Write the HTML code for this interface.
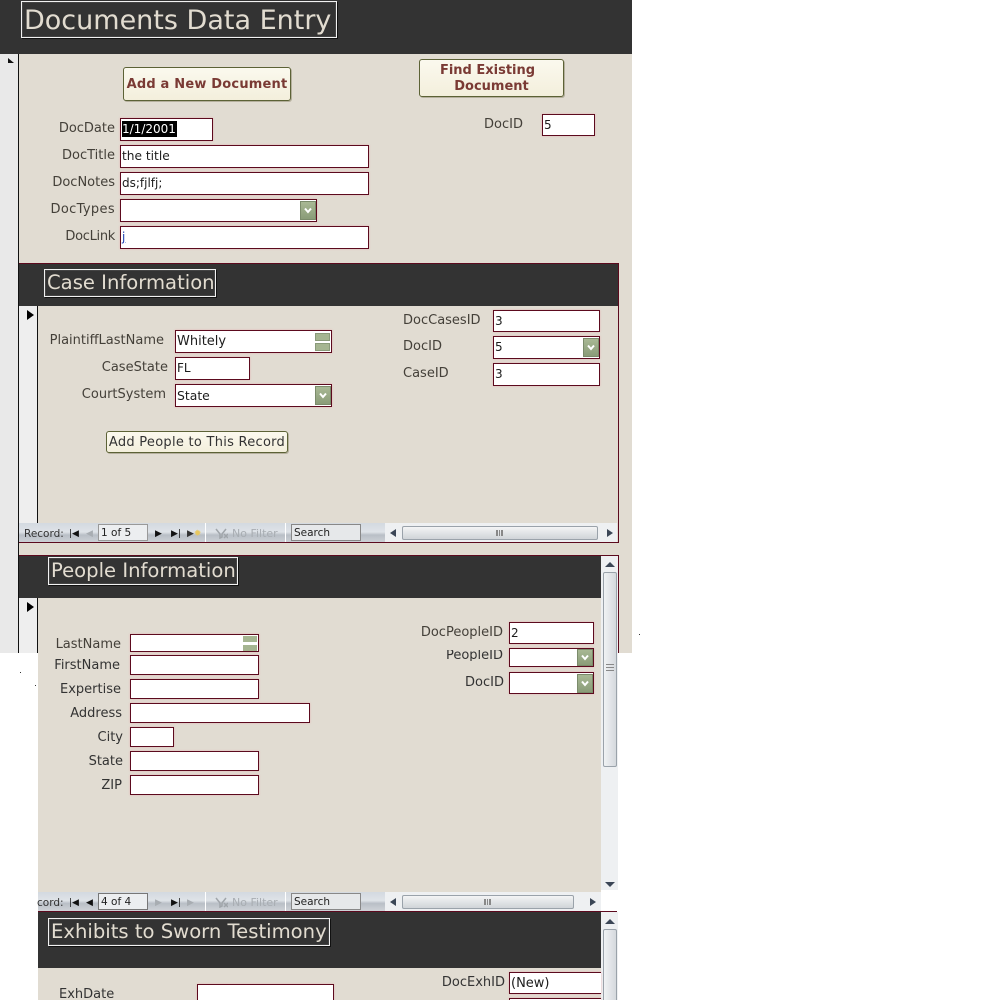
<!DOCTYPE html>
<html><head><meta charset="utf-8"><style>
html,body{margin:0;padding:0;background:#fff;width:1000px;height:1000px;overflow:hidden}
body{position:relative;font-family:"DejaVu Sans","Liberation Sans",sans-serif}
div,span.a{position:absolute;box-sizing:border-box}
.l{font-size:13px;color:#444039;text-align:right;white-space:nowrap;line-height:16px;height:16px;margin-top:1px}
.i{background:#fff;border:1px solid #5c0a1e;font-size:12px;color:#1c1c1c;line-height:21px;padding-left:1px;white-space:nowrap;overflow:hidden;box-shadow:0 0 2px #e6b4b4}
.t{border:1px solid #f2f2f2;outline:1px solid #444;outline-offset:-2px;background:#333;color:#e2dcd0;white-space:nowrap;font-size:19.6px;padding-left:2px;box-shadow:1px 1px 0 #111}
.d{background:#333}
.dd{width:16px;height:19px;background:linear-gradient(#a8b894,#8a9c78);border:1px solid #7b8b6b}
.dd svg{position:absolute;left:3px;top:5px;width:8px;height:7px}
.b{background:linear-gradient(#fbf9ee,#f3efdc);border:1px solid #5c6236;border-radius:3px;box-shadow:1px 1px 0 #b5b09d;text-align:center;white-space:nowrap}
.nav{height:20px;background:linear-gradient(#d3d9e0 0,#dfe3e8 45%,#b9bfc6 60%,#cfd3d8 100%);font-size:10.5px;color:#333;line-height:20px;white-space:nowrap}
.nb{border:1px solid #7c8794;background:#eceef0;font-size:10.5px;line-height:16px;height:17px;top:1px;padding-left:2px;color:#222}
.th{background:linear-gradient(90deg,#f0f2f4,#d5d9dd);border:1px solid #9aa2aa;border-radius:2px}
.thh{background:linear-gradient(#f3f4f5,#d0d4d8);border:1px solid #9aa2aa;border-radius:2px}
.g{color:#a8adb2}
.k{color:#111}
.nav span{top:1px}
</style></head><body>

<div class="d" style="left:0;top:0;width:632px;height:54px"></div>
<div style="left:0;top:54px;width:18px;height:599px;background:#e9e9e9"></div>
<div style="left:18px;top:54px;width:1px;height:599px;background:#111"></div>
<div style="left:19px;top:54px;width:613px;height:599px;background:#e1dcd2"></div>
<div style="left:38px;top:653px;width:563px;height:347px;background:#e1dcd2"></div>
<div style="left:8px;top:58px;width:0;height:0;border-left:6px solid #111;border-top:5px solid transparent"></div>

<div class="t" style="left:21px;top:1px;width:316px;height:37px;font-size:27px;line-height:38px">Documents Data Entry</div>

<div class="b" style="left:123px;top:67px;width:168px;height:34px;font-size:13px;font-weight:bold;color:#7a3a34;line-height:33px;letter-spacing:.2px">Add a New Document</div>
<div class="b" style="left:419px;top:59px;width:145px;height:38px;font-size:13px;font-weight:bold;color:#7a3a34;line-height:16px;padding-top:3px;white-space:normal"><span style="position:relative;left:-4px">Find Existing</span><br>Document</div>

<div class="l" style="left:20px;width:95px;top:120px">DocDate</div>
<div class="i" style="left:120px;top:118px;width:93px;height:23px"><span style="background:#000;color:#fff;display:inline-block;line-height:16px;width:55px;margin-top:2px;vertical-align:top">1/1/2001</span></div>
<div class="l" style="left:20px;width:95px;top:147px">DocTitle</div>
<div class="i" style="left:120px;top:145px;width:249px;height:23px;font-size:12.2px">the title</div>
<div class="l" style="left:20px;width:95px;top:174px">DocNotes</div>
<div class="i" style="left:120px;top:172px;width:249px;height:23px">ds;fjlfj;</div>
<div class="l" style="left:20px;width:95px;top:201px;letter-spacing:.35px">DocTypes</div>
<div class="i" style="left:120px;top:199px;width:197px;height:23px"></div>
<div class="dd" style="left:300px;top:201px"><svg viewBox="0 0 8 7"><path d="M1 1.5L4 5L7 1.5" fill="none" stroke="#fff" stroke-width="2"/></svg></div>
<div class="l" style="left:20px;width:95px;top:228px;letter-spacing:-.3px">DocLink</div>
<div class="i" style="left:120px;top:226px;width:249px;height:23px;color:#1a3fb0;text-decoration:underline">j</div>
<div class="l" style="left:470px;width:53px;top:116px">DocID</div>
<div class="i" style="left:542px;top:114px;width:53px;height:22px">5</div>

<!-- Case -->
<div style="left:618px;top:263px;width:1px;height:280px;background:#5c0a1e"></div>
<div class="d" style="left:19px;top:264px;width:599px;height:42px"></div>
<div style="left:19px;top:263px;width:600px;height:1px;background:#5c0a1e"></div>
<div class="t" style="left:44px;top:269px;width:172px;height:28px;line-height:26px">Case Information</div>
<div style="left:19px;top:306px;width:18px;height:217px;background:#eeeeee"></div>
<div style="left:37px;top:306px;width:1px;height:217px;background:#111"></div>
<div style="left:27px;top:310px;width:0;height:0;border-top:5px solid transparent;border-bottom:5px solid transparent;border-left:7px solid #000"></div>

<div class="l" style="left:30px;width:134px;top:332px">PlaintiffLastName</div>
<div class="i" style="left:175px;top:330px;width:157px;height:23px;font-size:13px">Whitely</div>
<div style="left:315px;top:333px;width:15px;height:8px;background:#a5b591;border:1px solid #8a9a7a"></div>
<div style="left:315px;top:343px;width:15px;height:8px;background:#a5b591;border:1px solid #8a9a7a"></div>
<div class="l" style="left:60px;width:108px;top:359px">CaseState</div>
<div class="i" style="left:175px;top:357px;width:75px;height:23px">FL</div>
<div class="l" style="left:60px;width:106px;top:386px">CourtSystem</div>
<div class="i" style="left:175px;top:384px;width:157px;height:23px;font-size:12.4px">State</div>
<div class="dd" style="left:315px;top:386px"><svg viewBox="0 0 8 7"><path d="M1 1.5L4 5L7 1.5" fill="none" stroke="#fff" stroke-width="2"/></svg></div>
<div class="b" style="left:106px;top:431px;width:182px;height:22px;font-size:13px;color:#333;line-height:21px;letter-spacing:.27px">Add People to This Record</div>

<div class="l" style="left:403px;top:312px">DocCasesID</div>
<div class="i" style="left:493px;top:310px;width:107px;height:22px">3</div>
<div class="l" style="left:403px;top:338px">DocID</div>
<div class="i" style="left:493px;top:336px;width:107px;height:23px">5</div>
<div class="dd" style="left:583px;top:338px"><svg viewBox="0 0 8 7"><path d="M1 1.5L4 5L7 1.5" fill="none" stroke="#fff" stroke-width="2"/></svg></div>
<div class="l" style="left:403px;top:365px">CaseID</div>
<div class="i" style="left:493px;top:363px;width:107px;height:23px">3</div>

<!-- nav 1 -->
<div class="nav" style="left:19px;top:523px;width:366px"><span style="position:absolute;left:5px">Record:</span>
<span class="k" style="position:absolute;left:50px;font-size:9px">|&#9664;</span><span class="g" style="position:absolute;left:67px;font-size:9px">&#9664;</span>
<div class="nb" style="left:79px;width:50px;border-color:#999">1 of 5</div>
<span class="k" style="position:absolute;left:136px;font-size:9px">&#9654;</span><span class="k" style="position:absolute;left:152px;font-size:9px">&#9654;|</span><span style="position:absolute;left:168px;font-size:9px;color:#333">&#9654;<span style="color:#e8c860">&#10041;</span></span>
<div style="left:186px;top:0;width:1px;height:20px;background:#fff"></div>
<svg style="position:absolute;left:196px;top:5px" width="13" height="11" viewBox="0 0 13 11"><path d="M1 1L5 6V10L7 9V6L11 1M9 6L13 10M13 6L9 10" fill="none" stroke="#a0a5aa" stroke-width="1.5"/></svg>
<span class="g" style="position:absolute;left:213px;font-size:11px">No Filter</span>
<div style="left:266px;top:0;width:1px;height:20px;background:#fff"></div>
<div class="nb" style="left:272px;width:70px;border-color:#888;background:#e6e8ea">Search</div>
</div>
<div style="left:385px;top:523px;width:232px;height:20px;background:#eef0f2"></div>
<div style="left:390px;top:529px;width:0;height:0;border-top:4px solid transparent;border-bottom:4px solid transparent;border-right:6px solid #3b4656"></div>
<div class="thh" style="left:402px;top:526px;width:196px;height:14px"></div>
<div style="left:496px;top:530px;width:7px;height:6px;border-left:1px solid #888;border-right:1px solid #888;background:linear-gradient(90deg,#888 1px,transparent 1px) 2px 0/2px 100%"></div>
<div style="left:607px;top:529px;width:0;height:0;border-top:4px solid transparent;border-bottom:4px solid transparent;border-left:6px solid #3b4656"></div>
<div style="left:19px;top:542px;width:600px;height:1px;background:#5c0a1e"></div>

<!-- People -->
<div style="left:618px;top:555px;width:1px;height:98px;background:#5c0a1e"></div>
<div style="left:19px;top:555px;width:600px;height:1px;background:#5c0a1e"></div>
<div class="d" style="left:19px;top:556px;width:582px;height:42px"></div>
<div class="t" style="left:48px;top:557px;width:190px;height:28px;line-height:26px">People Information</div>
<div style="left:19px;top:598px;width:18px;height:55px;background:#eeeeee"></div>
<div style="left:37px;top:598px;width:1px;height:55px;background:#111"></div>
<div style="left:27px;top:602px;width:0;height:0;border-top:5px solid transparent;border-bottom:5px solid transparent;border-left:7px solid #000"></div>
<div style="left:601px;top:556px;width:17px;height:334px;background:#eef0f2"></div>
<div style="left:605px;top:562px;width:0;height:0;border-left:5px solid transparent;border-right:5px solid transparent;border-bottom:5px solid #3b4656"></div>
<div class="th" style="left:603px;top:572px;width:14px;height:195px"></div>
<div style="left:606px;top:664px;width:8px;height:7px;border-top:1px solid #888;border-bottom:1px solid #888;background:linear-gradient(#888,#888) 0 2px/100% 1px no-repeat"></div>
<div style="left:605px;top:882px;width:0;height:0;border-left:5px solid transparent;border-right:5px solid transparent;border-top:5px solid #3b4656"></div>

<div class="l" style="left:30px;width:91px;top:636px">LastName</div>
<div class="i" style="left:130px;top:634px;width:129px;height:18px"></div>
<div style="left:243px;top:636px;width:14px;height:6px;background:#a5b591"></div>
<div style="left:243px;top:645px;width:14px;height:6px;background:#a5b591"></div>
<div class="l" style="left:30px;width:90px;top:657px;color:#333">FirstName</div>
<div class="i" style="left:130px;top:655px;width:129px;height:20px"></div>
<div class="l" style="left:30px;width:91px;top:681px;color:#333">Expertise</div>
<div class="i" style="left:130px;top:679px;width:129px;height:20px"></div>
<div class="l" style="left:30px;width:92px;top:705px;color:#333">Address</div>
<div class="i" style="left:130px;top:703px;width:180px;height:20px"></div>
<div class="l" style="left:30px;width:93px;top:729px;color:#333">City</div>
<div class="i" style="left:130px;top:727px;width:44px;height:20px"></div>
<div class="l" style="left:30px;width:93px;top:753px;color:#333">State</div>
<div class="i" style="left:130px;top:751px;width:129px;height:20px"></div>
<div class="l" style="left:30px;width:92px;top:777px;color:#333">ZIP</div>
<div class="i" style="left:130px;top:775px;width:129px;height:20px"></div>

<div class="l" style="left:400px;width:103px;top:624px">DocPeopleID</div>
<div class="i" style="left:509px;top:622px;width:85px;height:22px">2</div>
<div style="left:400px;width:103px;top:650px;height:11px;overflow:hidden"><div class="l" style="left:0;width:103px;top:-3px;color:#333">PeopleID</div></div>
<div class="i" style="left:509px;top:648px;width:85px;height:19px"></div>
<div class="dd" style="left:577px;top:649px;height:17px"><svg viewBox="0 0 8 7" style="top:4px"><path d="M1 1.5L4 5L7 1.5" fill="none" stroke="#fff" stroke-width="2"/></svg></div>
<div class="l" style="left:400px;width:104px;top:674px;color:#333">DocID</div>
<div class="i" style="left:509px;top:672px;width:85px;height:22px"></div>
<div class="dd" style="left:577px;top:674px"><svg viewBox="0 0 8 7"><path d="M1 1.5L4 5L7 1.5" fill="none" stroke="#fff" stroke-width="2"/></svg></div>

<!-- nav 2 -->
<div class="nav" style="left:38px;top:892px;width:347px;height:19px"><span style="position:absolute;left:-1px">cord:</span>
<span class="k" style="position:absolute;left:31px;font-size:9px">|&#9664;</span><span class="k" style="position:absolute;left:48px;font-size:9px">&#9664;</span>
<div class="nb" style="left:60px;width:50px;border-color:#777">4 of 4</div>
<span class="g" style="position:absolute;left:117px;font-size:9px">&#9654;</span><span class="k" style="position:absolute;left:133px;font-size:9px">&#9654;|</span><span class="g" style="position:absolute;left:149px;font-size:9px">&#9654;</span>
<div style="left:167px;top:0;width:1px;height:19px;background:#fff"></div>
<svg style="position:absolute;left:177px;top:5px" width="13" height="11" viewBox="0 0 13 11"><path d="M1 1L5 6V10L7 9V6L11 1M9 6L13 10M13 6L9 10" fill="none" stroke="#a0a5aa" stroke-width="1.5"/></svg>
<span class="g" style="position:absolute;left:194px;font-size:11px">No Filter</span>
<div style="left:247px;top:0;width:1px;height:19px;background:#fff"></div>
<div class="nb" style="left:253px;width:70px;border-color:#888;background:#e6e8ea">Search</div>
</div>
<div style="left:385px;top:892px;width:216px;height:19px;background:#eef0f2"></div>
<div style="left:390px;top:898px;width:0;height:0;border-top:4px solid transparent;border-bottom:4px solid transparent;border-right:6px solid #3b4656"></div>
<div class="thh" style="left:402px;top:895px;width:172px;height:14px"></div>
<div style="left:484px;top:899px;width:7px;height:6px;border-left:1px solid #888;border-right:1px solid #888;background:linear-gradient(90deg,#888 1px,transparent 1px) 2px 0/2px 100%"></div>
<div style="left:590px;top:898px;width:0;height:0;border-top:4px solid transparent;border-bottom:4px solid transparent;border-left:6px solid #3b4656"></div>

<!-- Exhibits -->
<div style="left:38px;top:911px;width:579px;height:1px;background:#5c0a1e"></div>
<div class="d" style="left:38px;top:912px;width:563px;height:56px"></div>
<div class="t" style="left:48px;top:918px;width:282px;height:28px;line-height:26px">Exhibits to Sworn Testimony</div>
<div style="left:601px;top:912px;width:17px;height:88px;background:#eef0f2"></div>
<div style="left:605px;top:919px;width:0;height:0;border-left:5px solid transparent;border-right:5px solid transparent;border-bottom:5px solid #3b4656"></div>
<div class="th" style="left:603px;top:929px;width:14px;height:75px"></div>

<div class="l" style="left:59px;top:986px;color:#333">ExhDate</div>
<div class="i" style="left:197px;top:984px;width:137px;height:22px"></div>
<div class="l" style="left:400px;width:105px;top:974px;color:#333">DocExhID</div>
<div class="i" style="left:509px;top:972px;width:92px;height:22px;border-right:0;font-size:13px">(New)</div>
<div class="i" style="left:509px;top:998px;width:92px;height:6px;border-right:0"></div>

<div style="left:20px;top:672px;width:1px;height:1px;background:#333"></div>
<div style="left:35px;top:685px;width:1px;height:1px;background:#333"></div>
<div style="left:639px;top:634px;width:1px;height:1px;background:#333"></div>
</body></html>
